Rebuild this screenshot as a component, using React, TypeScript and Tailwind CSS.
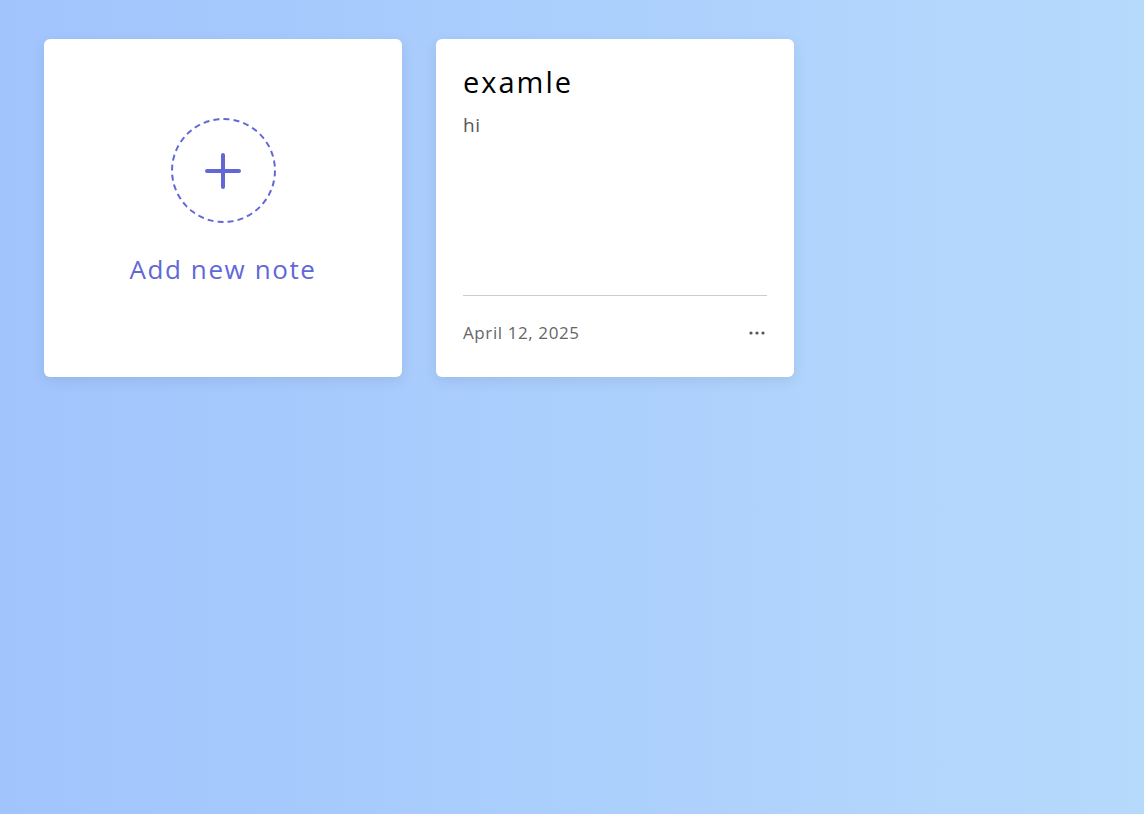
import React from "react";

const FONT = { fontFamily: '"Open Sans", "Lato", sans-serif' };

function AddNoteCard() {
  return (
    <button className="w-[358px] h-[338px] bg-white rounded-[6px] shadow-[0_4px_14px_rgba(0,0,0,0.08)] flex flex-col items-center justify-center cursor-pointer">
      <div className="w-[105px] h-[105px] rounded-full border-2 border-dashed border-[#6168d6] flex items-center justify-center mt-[-12px]">
        <svg width="38" height="38" viewBox="0 0 38 38" fill="none">
          <path d="M19 3v32M3 19h32" stroke="#6168d6" strokeWidth="4" strokeLinecap="round" />
        </svg>
      </div>
      <p className="mt-[29px] text-[26px] leading-[34px] tracking-[1.6px] text-[#6168d6]">Add new note</p>
    </button>
  );
}

function NoteCard({ title, body, date }: { title: string; body: string; date: string }) {
  return (
    <div className="w-[358px] h-[338px] bg-white rounded-[6px] shadow-[0_4px_14px_rgba(0,0,0,0.08)] flex flex-col px-[27px] pt-[22px] pb-[32px]">
      <h2 className="text-[29px] leading-[42px] tracking-[2px] text-black">{title}</h2>
      <p className="mt-[8px] text-[19px] tracking-[0.5px] text-[#555] flex-1">{body}</p>
      <div className="border-t border-[#ccc] pt-[25px] flex items-center justify-between">
        <span className="text-[17px] leading-[24px] tracking-[0.6px] text-[#666]">{date}</span>
        <svg width="18" height="6" viewBox="0 0 18 6" className="mr-[1px]">
          <circle cx="3" cy="3" r="1.6" fill="#555" />
          <circle cx="9" cy="3" r="1.6" fill="#555" />
          <circle cx="15" cy="3" r="1.6" fill="#555" />
        </svg>
      </div>
    </div>
  );
}

export default function App() {
  return (
    <div
      className="min-h-screen bg-gradient-to-r from-[#a1c4fd] to-[#b6dafc] px-[44px] py-[39px]"
      style={FONT}
    >
      <div className="flex flex-wrap gap-[34px]">
        <AddNoteCard />
        <NoteCard title="examle" body="hi" date="April 12, 2025" />
      </div>
    </div>
  );
}
